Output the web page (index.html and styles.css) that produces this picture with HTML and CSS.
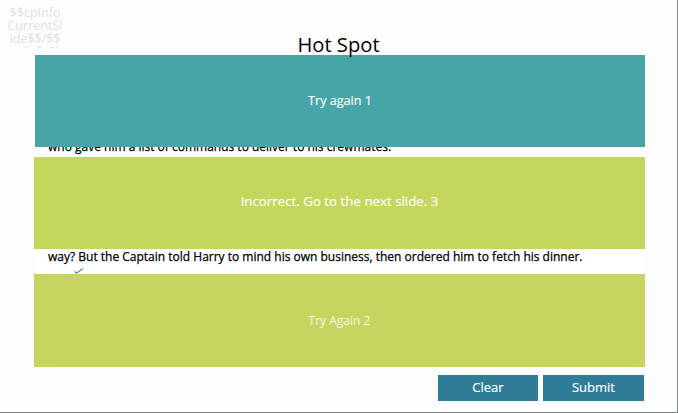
FILE: index.html
```html
<!DOCTYPE html>
<html lang="en">
<head>
    <meta charset="UTF-8">
    <meta name="viewport" content="width=device-width, initial-scale=1.0">
    <title>Hot Spot</title>
    <link rel="stylesheet" href="styles.css">
</head>
<body>
    <div class="slide">
        <div class="header">
            <div class="slide-var">$$cpInfo CurrentSl ide$$/$$ cpInfoSl</div>
            <h1>Hot Spot</h1>
        </div>
        <div class="panel panel-teal">Try again 1</div>
        <div class="strip strip-clipped">
            <p>who gave him a list of commands to deliver to his crewmates.</p>
        </div>
        <div class="panel panel-green">Incorrect. Go to the next slide. 3</div>
        <div class="strip strip-text">
            <p>way? But the Captain told Harry to mind his own business, then ordered him to fetch his dinner.</p>
            <svg class="tick" width="10" height="6" viewBox="0 0 10 6">
                <path d="M0.5 3.5 L2.5 5.2 L9 0.6" fill="none" stroke="#4f86c6" stroke-width="1.2"/>
            </svg>
        </div>
        <div class="panel panel-light">Try Again 2</div>
        <div class="buttons">
            <button>Clear</button>
            <button>Submit</button>
        </div>
    </div>
</body>
</html>
```

FILE: styles.css
```css
html, body {
    margin: 0;
    padding: 0;
}
body {
    font-family: "Open Sans", "Noto Sans", Arial, sans-serif;
    background-color: #fff;
}
.slide {
    width: 677px;
    height: 412px;
    background-color: #fdfdfd;
    border-right: 1px solid #7b8184;
    border-bottom: 1px solid #7b8184;
    overflow: hidden;
}
.header {
    display: grid;
    grid-template-columns: 1fr auto 1fr;
    height: 55px;
}
.slide-var {
    width: 56px;
    height: 42px;
    margin: 6px 0 0 7px;
    overflow: hidden;
    font-size: 12.5px;
    line-height: 13px;
    text-align: center;
    color: #e0e0e0;
}
h1 {
    grid-column: 2;
    margin: 33px 0 0;
    font-size: 20.2px;
    line-height: 22px;
    font-weight: 400;
    color: #000;
}
.panel {
    display: flex;
    align-items: center;
    justify-content: center;
    width: 611px;
    height: 92px;
    margin-left: 34px;
    padding-bottom: 1px;
    box-sizing: border-box;
    font-size: 12px;
    color: #f2f7e4;
}
.panel-teal {
    width: 610px;
    margin-left: 35px;
    background-color: #47a5a8;
    color: #f4fafa;
    font-size: 12.6px;
    -webkit-text-stroke: 0.2px #f4fafa;
}
.panel-green {
    padding-bottom: 4px;
    background-color: #c5d65d;
    color: #fbfdf0;
    font-size: 13.3px;
    -webkit-text-stroke: 0.2px #fbfdf0;
}
.panel-light {
    height: 93px;
    background-color: #c7d560;
    font-size: 12px;
}
.strip {
    width: 611px;
    margin-left: 34px;
    background-color: #fff;
    overflow: hidden;
}
.strip p {
    margin: 0;
    padding-left: 14px;
    font-size: 12px;
    line-height: 15px;
    color: #000;
    -webkit-text-stroke: 0.25px #000;
    white-space: nowrap;
}
.strip-clipped {
    height: 10px;
}
.strip-clipped p {
    margin-top: -8px;
}
.strip-text {
    height: 25px;
}
.tick {
    display: block;
    margin: 4px 0 0 40px;
}
.buttons {
    display: flex;
    justify-content: flex-end;
    gap: 5px;
    width: 610px;
    margin: 8px 0 0 34px;
}
button {
    width: 100px;
    height: 26px;
    padding: 0 0 2px;
    border: none;
    background-color: #2f7c96;
    color: #f4fafb;
    font-family: "Open Sans", "Noto Sans", Arial, sans-serif;
    font-size: 13px;
    -webkit-text-stroke: 0.2px #f4fafb;
}
button:last-child {
    width: 101px;
}
```
